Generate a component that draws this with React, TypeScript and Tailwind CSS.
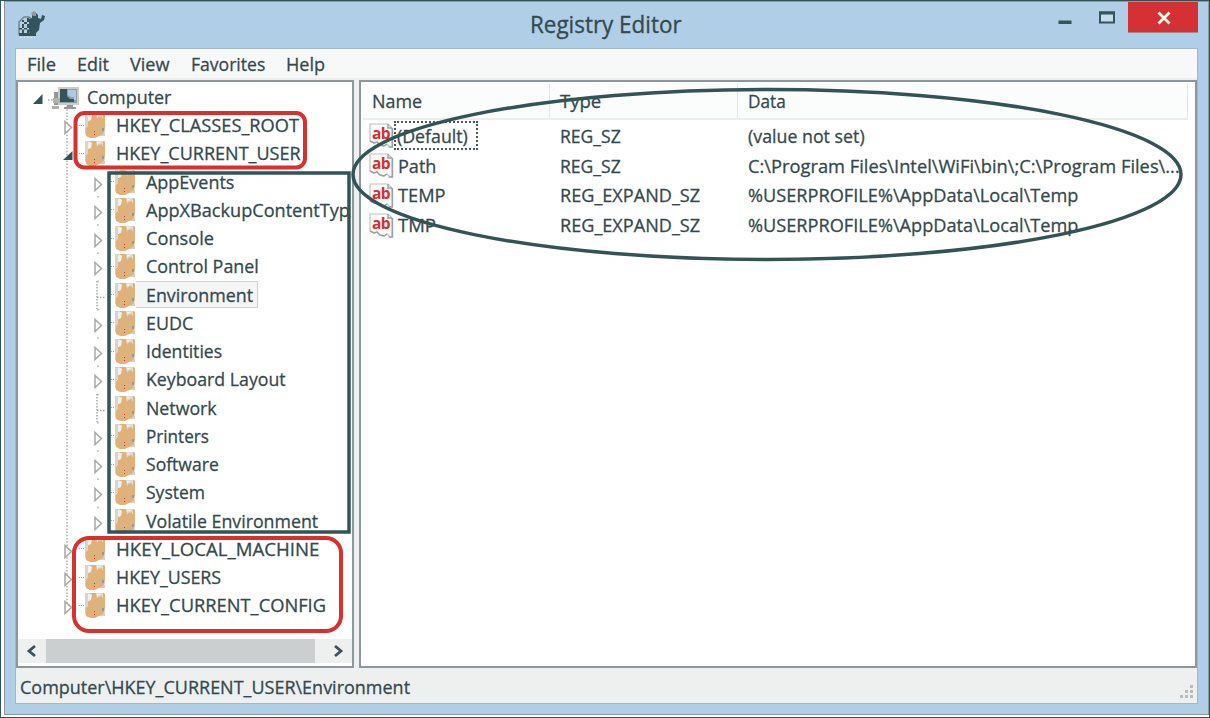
import { useLayoutEffect, useRef, useState } from "react";

/** One line of text drawn at a given width. */
function Label({ text, width }: { text: string; width: number }) {
  const ref = useRef<HTMLSpanElement>(null);
  const [scale, setScale] = useState(1);
  useLayoutEffect(() => {
    if (ref.current) setScale(width / ref.current.offsetWidth);
  }, [width, text]);
  return (
    <span className="block shrink-0" style={{ width }}>
      <span ref={ref} className="inline-block origin-left whitespace-pre" style={{ transform: `scaleX(${scale})` }}>
        {text}
      </span>
    </span>
  );
}

type Node = { text: string; width: number; level: 1 | 2; mark: "closed" | "open" | "none"; selected?: boolean };

const nodes: Node[] = [
  { text: "HKEY_CLASSES_ROOT", width: 183, level: 1, mark: "closed" },
  { text: "HKEY_CURRENT_USER", width: 185, level: 1, mark: "open" },
  { text: "AppEvents", width: 88, level: 2, mark: "closed" },
  { text: "AppXBackupContentTyp", width: 204, level: 2, mark: "closed" },
  { text: "Console", width: 68, level: 2, mark: "closed" },
  { text: "Control Panel", width: 113, level: 2, mark: "closed" },
  { text: "Environment", width: 107, level: 2, mark: "none", selected: true },
  { text: "EUDC", width: 47, level: 2, mark: "closed" },
  { text: "Identities", width: 76, level: 2, mark: "closed" },
  { text: "Keyboard Layout", width: 140, level: 2, mark: "closed" },
  { text: "Network", width: 71, level: 2, mark: "none" },
  { text: "Printers", width: 63, level: 2, mark: "closed" },
  { text: "Software", width: 73, level: 2, mark: "closed" },
  { text: "System", width: 59, level: 2, mark: "closed" },
  { text: "Volatile Environment", width: 172, level: 2, mark: "closed" },
  { text: "HKEY_LOCAL_MACHINE", width: 203, level: 1, mark: "closed" },
  { text: "HKEY_USERS", width: 105, level: 1, mark: "closed" },
  { text: "HKEY_CURRENT_CONFIG", width: 210, level: 1, mark: "closed" },
];

const values = [
  { name: "(Default)", nw: 71, type: "REG_SZ", tw: 61, data: "(value not set)", dw: 117, focus: true },
  { name: "Path", nw: 38, type: "REG_SZ", tw: 61, data: "C:\\Program Files\\Intel\\WiFi\\bin\\;C:\\Program Files\\...", dw: 432 },
  { name: "TEMP", nw: 48, type: "REG_EXPAND_SZ", tw: 140, data: "%USERPROFILE%\\AppData\\Local\\Temp", dw: 330 },
  { name: "TMP", nw: 38, type: "REG_EXPAND_SZ", tw: 140, data: "%USERPROFILE%\\AppData\\Local\\Temp", dw: 330 },
];

const menus = [
  { text: "File", w: 29 },
  { text: "Edit", w: 32 },
  { text: "View", w: 40 },
  { text: "Favorites", w: 74 },
  { text: "Help", w: 39 },
];

function FolderIcon() {
  return (
    <svg className="h-[26px] w-[22px] shrink-0" viewBox="0 0 22 26">
      <path d="M1 1h19l1 1v14l-1 7-5 1-4 2H6l-4-2-1-5z" fill="#deb27a" />
      <path d="M1 1h5v3L4 8v6l-2 2H1z" fill="#d9d5cb" />
      <path d="M4 2h3l1 1-1 5-2 1H4z" fill="#f1f0ec" />
      <path d="M12 1h7v5h-1V4l-4 1-1 2z" fill="#dedbd2" />
      <path d="M13 2h4l-4 2z" fill="#f5f3ee" />
      <path d="M1 16h1v6H1z" fill="#d6cfc0" />
      <path d="M18 16h2v3h-2z" fill="#8e9aa2" />
      <path d="M19 21h2v3h-4z" fill="#d6cfc0" />
      <path d="M10 19h1v1h-1zM10 22h1v1h-1z" fill="#d8302c" />
    </svg>
  );
}

function Expander({ mark }: { mark: Node["mark"] }) {
  return (
    <svg className="h-[28px] w-[14px] shrink-0" viewBox="0 0 14 28">
      {mark === "closed" && <path d="M4 10.500v12l6.500-6z" fill="#fff" stroke="#aaa8a3" strokeWidth="1.500" />}
      {mark === "open" && <path d="M11.500 12v9H2z" fill="#335457" />}
      {mark === "none" && <path d="M6 0v28M6 16.500h8" fill="none" stroke="#a5a8a7" strokeWidth="1.500" strokeDasharray="1.500 1.500" />}
    </svg>
  );
}

function StringIcon() {
  return (
    <span className="relative flex h-[25px] w-[25px] shrink-0">
      <svg className="h-[25px] w-[25px]" viewBox="0 0 25 25">
        <path d="M1 1h18l4 4v19l-3-1-2-2-3 2-4-1-3-3-3 1-4-2z" fill="#fbfbfa" stroke="#c4c2bd" strokeWidth="1.200" />
        <path d="M23.500 5v19h-4M19 1v4h4M1 18l4 2 3-1 3 3 4 1 3-2" fill="none" stroke="#9aa1a5" strokeWidth="1.400" />
      </svg>
      <span className="absolute left-[3px] top-px font-['Open_Sans',sans-serif] text-[15.5px] leading-[18px] font-bold tracking-[-0.6px] text-[#d8302c] [-webkit-text-stroke:0]">ab</span>
    </span>
  );
}

function TitleBar() {
  return (
    <header className="flex h-[46px] shrink-0 items-start">
      <div className="flex w-[120px] pt-[8px] pl-[13px]">
        <svg className="h-[28px] w-[28px]" viewBox="0 0 28 28">
          <path d="M1 12 6 7h5l4 3v14H1z" fill="#b7cfe0" stroke="#76868e" strokeWidth="1.500" />
          <path d="m11 9 3-1V4l3-2 3 3v3l3 1 1-4 3 1-1 4-4 3-1 7-4 4-5 2-1-5z" fill="#33545a" />
          <path d="M13 3l3-2 2 2v3h-3z" fill="#8e9aa2" />
          <path d="M1 23h17v3H1zM1 18h13v1.500H1zM4 10v13h2V10zM9 8v15h2V8zM4 12h9v2H4z" fill="#33545a" />
          <path d="M2 27.500h15" stroke="#e4edf3" strokeWidth="1" strokeDasharray="1.500 2" />
        </svg>
      </div>
      <div className="flex flex-1 pt-[4px] pl-[405px] text-[23px] leading-[36px]">
        <Label text="Registry Editor" width={152} />
      </div>
      <div className="flex">
        <svg className="h-[32px] w-[70px]" viewBox="0 0 70 32">
          <path d="M.5 18.500h13v3.500H.5z" fill="#33545a" />
          <path d="M42 10.500h14v10H42z" fill="#c6ddee" stroke="#33545a" strokeWidth="2" />
          <path d="M41 9.500h16v3H41z" fill="#33545a" />
        </svg>
        <div className="flex h-[31px] w-[70px] items-center justify-center border-b border-[#9d8c98] bg-[#d43135]">
          <svg className="mt-[2px] ml-px h-[14px] w-[14px]" viewBox="0 0 14 14">
            <path d="m1.500 1.500 11 11m0-11-11 11" fill="none" stroke="#fff8ec" strokeWidth="2.800" />
          </svg>
        </div>
      </div>
      <div className="w-[10px]" />
    </header>
  );
}

function Tree() {
  return (
    <section className="relative flex w-[338px] flex-col overflow-hidden border-2 border-[#8c979e] bg-white">
      <svg className="absolute top-[24px] left-[48px] h-[502px] w-[4px]" viewBox="0 0 4 502">
        <path d="M1 0v502" stroke="#aaacaa" strokeWidth="1.500" strokeDasharray="1.500 1.700" />
      </svg>
      <svg className="absolute top-[91px] left-[79px] h-[350px] w-[4px]" viewBox="0 0 4 350">
        <path d="M1 0v350" stroke="#aaacaa" strokeWidth="1.500" strokeDasharray="1.500 26.750" strokeDashoffset="-23" />
      </svg>
      <div className="relative flex h-[29px] items-center pl-[13px]">
        <svg className="h-[28px] w-[48px] shrink-0" viewBox="0 0 48 28">
          <path d="M11.500 11v10H2z" fill="#33545a" />
          <path d="M17 17h6" stroke="#aaa8a3" strokeWidth="1.500" strokeDasharray="1.500 1.500" />
          <path d="M27 4h21v18H27z" fill="#cfccc4" />
          <path d="M29 6h17v14H29z" fill="#8e9fa9" />
          <path d="M29 6h7v7l3 3h4v3H29z" fill="#33545a" />
          <path d="M37 7h8v10h-2v-3h-3l-3-2z" fill="#aacbe2" />
          <path d="M36 22h6v2h3v2H33v-2h3zM23 9h4v13h-4z" fill="#8e9aa2" />
          <path d="M22 15h7v5h-7zM21 23h7v3h-7z" fill="#b4b2ac" />
        </svg>
        <div className="pl-[8px]"><Label text="Computer" width={84} /></div>
      </div>
      {nodes.map((n) => (
        <div key={n.text} className={`relative flex h-[28.25px] shrink-0 items-center ${n.level === 1 ? "pl-[43px]" : "pl-[73px]"}`}>
          <Expander mark={n.mark} />
          <span className="ml-[4px] w-[5px] shrink-0 border-t border-dotted border-[#aaa8a3]" />
          <FolderIcon />
          <div className={`flex h-[27px] shrink-0 items-center pl-[10px] ${n.selected ? "border border-l-0 border-[#d0d1cd] bg-[#f4f5f5] pr-[4px]" : ""}`}>
            <Label text={n.text} width={n.width} />
          </div>
        </div>
      ))}
      <div className="mt-auto mb-[3px] flex h-[24px] shrink-0 items-stretch bg-[#eef0f0] pl-[2px]">
        <svg className="h-[24px] w-[26px]" viewBox="0 0 26 24"><path d="m15 7-6 5 6 5" fill="none" stroke="#33545a" strokeWidth="2.800" /></svg>
        <div className="w-[269px] bg-[#cccfcf]" />
        <svg className="ml-auto h-[24px] w-[26px]" viewBox="0 0 26 24"><path d="m9 7 6 5-6 5" fill="none" stroke="#33545a" strokeWidth="2.800" /></svg>
      </div>
    </section>
  );
}

function ValueList() {
  return (
    <section className="flex flex-1 flex-col border-2 border-[#8c979e] bg-white">
      <div className="mr-[7px] ml-[2px] flex h-[38px] items-center border-b-2 border-[#eceeee] bg-[#fbfcfc] pt-[2px]">
        <div className="flex h-full w-[187px] items-center border-r border-[#e4e6e6] pl-[9px]"><Label text="Name" width={50} /></div>
        <div className="flex h-full w-[188px] items-center border-r border-[#e4e6e6] pl-[10px]"><Label text="Type" width={41} /></div>
        <div className="flex h-full flex-1 items-center border-r border-[#e4e6e6] pl-[10px]"><Label text="Data" width={38} /></div>
      </div>
      <div className="pt-[1px]">
        {values.map((v) => (
          <div key={v.name} className="flex h-[29.8px] items-center pl-[8px]">
            <StringIcon />
            <div className="flex w-[166px]">
              <div className={`flex h-[29px] items-center ${v.focus ? "border-2 border-dotted border-[#48585c] pr-[8px] pl-px" : "pl-[4px]"}`}>
                <Label text={v.name} width={v.nw} />
              </div>
            </div>
            <div className="w-[188px]"><Label text={v.type} width={v.tw} /></div>
            <Label text={v.data} width={v.dw} />
          </div>
        ))}
      </div>
    </section>
  );
}

function Annotations() {
  return (
    <svg className="pointer-events-none absolute -top-px -left-px h-[718px] w-[1210px]" viewBox="0 0 1210 718" fill="none">
      <ellipse cx="767" cy="174.500" rx="414" ry="85" stroke="#335457" strokeWidth="3.500" />
      <rect x="109" y="173" width="240" height="359" stroke="#335457" strokeWidth="3.500" />
      <rect x="75.500" y="113" width="229.500" height="54.500" rx="9" stroke="#d8302c" strokeWidth="4" />
      <rect x="74" y="538" width="267" height="93" rx="15" stroke="#d8302c" strokeWidth="4" />
    </svg>
  );
}

export default function App() {
  return (
    <div className="relative flex h-[718px] w-[1210px] overflow-hidden border border-[#335457] bg-white pb-[2px] pl-[3px] font-['Open_Sans',sans-serif] text-[19px] leading-[26px] text-[#33494e] [-webkit-text-stroke:0.3px_#33494e]">
      <div className="flex flex-1 flex-col border border-[#8c979e] bg-[#b0cee6]">
        <TitleBar />
        <main className="mr-[10px] ml-[10px] flex h-[656px] flex-col border border-[#a7b7c2] bg-[#eef0f0]">
          <nav className="flex h-[31px] shrink-0 items-start gap-[21px] border-b-2 border-[#eef0f0] bg-[#f7f8f8] pt-[2px] pl-[11px]">
            {menus.map((m) => <Label key={m.text} text={m.text} width={m.w} />)}
          </nav>
          <div className="flex h-[588px] shrink-0 gap-[5px]">
            <Tree />
            <ValueList />
          </div>
          <footer className="flex flex-1 items-center justify-between pb-[3px] pl-[4px]">
            <div className="-mt-px pt-[6px]"><Label text="Computer\HKEY_CURRENT_USER\Environment" width={390} /></div>
            <svg className="h-[15px] w-[18px] self-end" viewBox="0 0 18 15">
              <path d="M11 0h3v3h-3zM6 5h3v3H6zM11 5h3v3h-3zM1 10h3v3H1zM6 10h3v3H6zM11 10h3v3h-3z" fill="#bcbab5" />
            </svg>
          </footer>
        </main>
      </div>
      <Annotations />
    </div>
  );
}
